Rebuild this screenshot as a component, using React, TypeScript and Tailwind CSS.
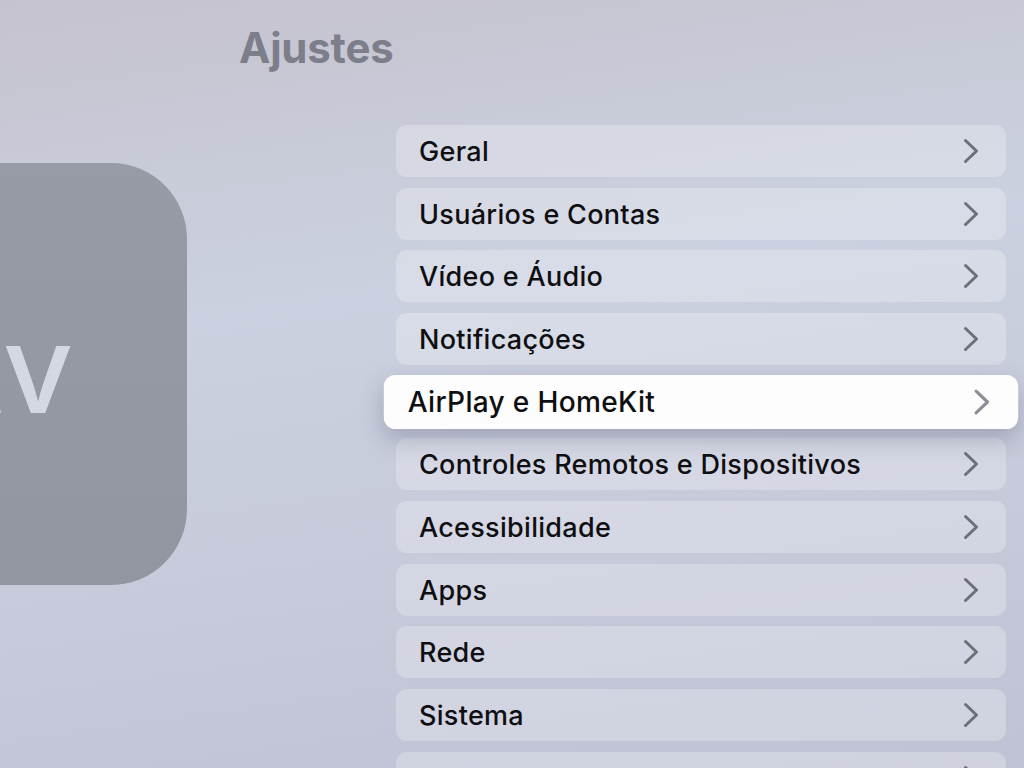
const ITEMS = [
  'Geral',
  'Usuários e Contas',
  'Vídeo e Áudio',
  'Notificações',
  'AirPlay e HomeKit',
  'Controles Remotos e Dispositivos',
  'Acessibilidade',
  'Apps',
  'Rede',
  'Sistema',
  'Termos e Regulamentos',
];

const FOCUSED = 'AirPlay e HomeKit';

function Chevron({ color }: { color: string }) {
  return (
    <svg width="16" height="26" viewBox="0 0 16 26" fill="none" className="shrink-0">
      <path d="M2.5 2.5 L13.5 13 L2.5 23.5" stroke={color} strokeWidth="3" strokeLinecap="round" strokeLinejoin="round" />
    </svg>
  );
}

export default function App() {
  return (
    <div
      className="h-[768px] w-[1024px] overflow-hidden bg-[linear-gradient(172deg,#c5c3ce_0%,#cbd1e0_38%,#c7cbdb_65%,#bfc2d5_100%)] text-[#0f0f12]"
      style={{ fontFamily: 'Inter, "Noto Sans", sans-serif' }}
    >
      <h1 className="pl-[239px] pt-[27px] text-[42px] font-bold leading-none tracking-[-0.2px] text-[#7c7e89]">Ajustes</h1>

      <div className="flex">
        {/* app icon, mostly off screen */}
        <div className="w-[396px] shrink-0 pt-[94px]">
          <div className="ml-[-235px] flex h-[422px] w-[422px] items-center justify-end rounded-[76px] bg-[linear-gradient(180deg,#969ba5,#9196a1)] pb-[10px] pr-[117px]">
            <span className="text-[122px] font-medium leading-none tracking-[-3px] text-[#d3d8e3]">tv</span>
          </div>
        </div>

        <div className="flex w-[610px] flex-col gap-[10.67px] pt-[56px]">
          {ITEMS.map((item) =>
            item === FOCUSED ? (
              <div
                key={item}
                className="flex h-[52px] scale-[1.04] items-center justify-between rounded-[11px] bg-[#fdfdfd] pl-[23px] pr-[27px] shadow-[0_10px_24px_rgba(40,44,70,0.25)]"
              >
                <span className="pt-[1px] text-[27px] font-[450] leading-none tracking-[0.3px]">{item}</span>
                <Chevron color="#8e8f96" />
              </div>
            ) : (
              <div
                key={item}
                className="flex h-[52px] shrink-0 items-center justify-between rounded-[11px] bg-white/25 pl-[23px] pr-[27px]"
              >
                <span className="pt-[1px] text-[27px] font-[450] leading-none tracking-[0.3px]">{item}</span>
                <Chevron color="#6e7078" />
              </div>
            ),
          )}
        </div>
      </div>
    </div>
  );
}
